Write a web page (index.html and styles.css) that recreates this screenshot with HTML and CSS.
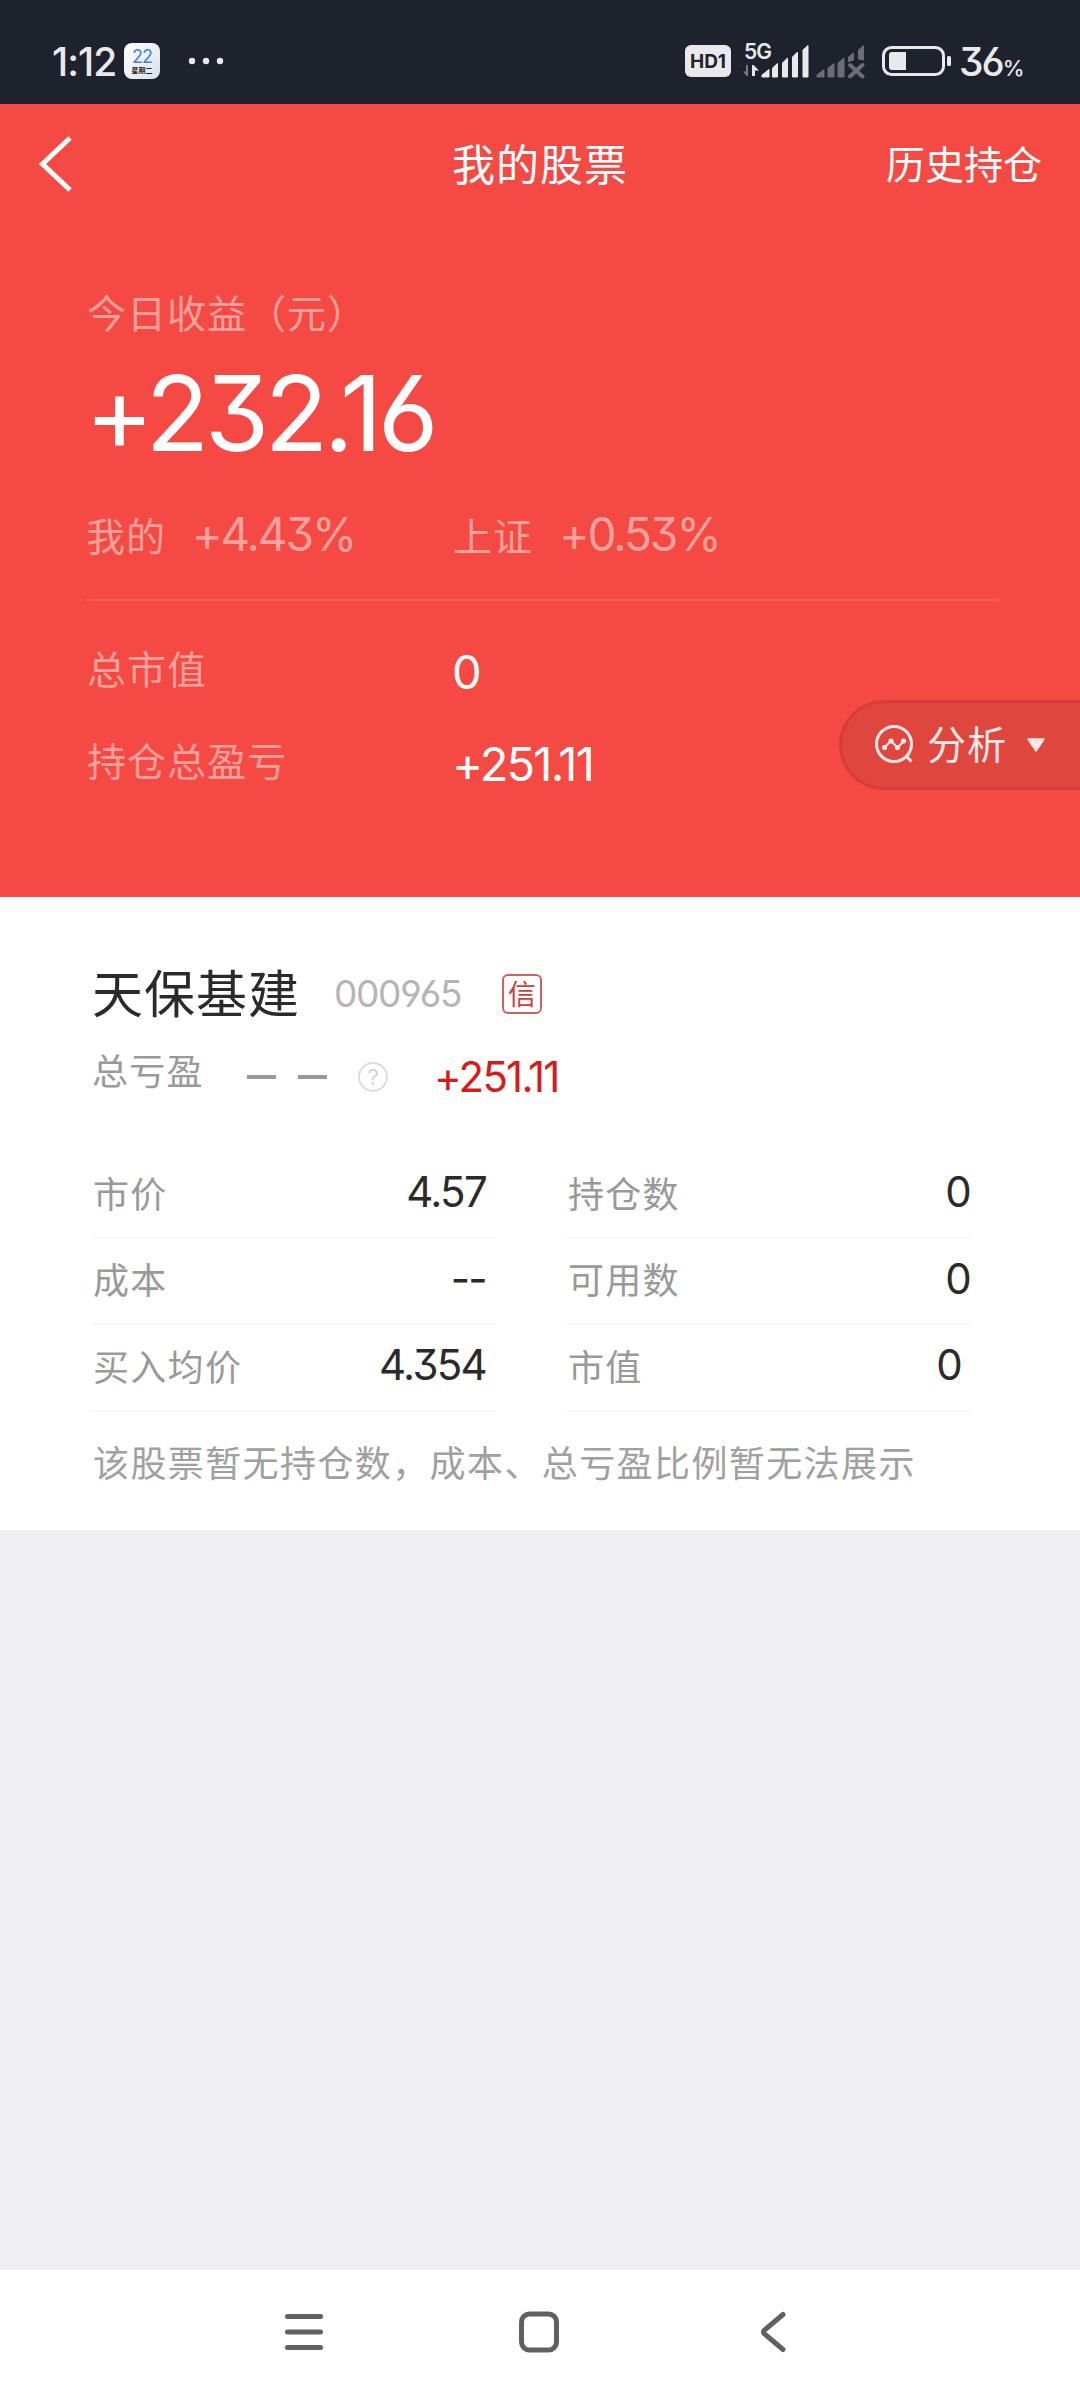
FILE: index.html
```html
<!DOCTYPE html>
<html lang="zh-CN">
  <head>
    <meta charset="UTF-8" />
    <meta name="viewport" content="width=device-width, initial-scale=1.0" />
    <title>我的股票</title>
    <link rel="stylesheet" href="styles.css">
  </head>
  <body>
    <div class="status-bar">
      <span class="time num">1:12</span>
      <div class="calendar">
        <span class="cal-day num">22</span>
        <span class="cal-week">星期二</span>
      </div>
      <svg class="dots" width="36" height="8" viewBox="0 0 36 8" fill="#e9e9eb">
        <circle cx="4" cy="4" r="3.2" /><circle cx="18" cy="4" r="3.2" /><circle cx="32" cy="4" r="3.2" />
      </svg>

      <span class="hd num">HD1</span>
      <div class="network">
        <span class="net-type num">5G</span>
        <svg width="68" height="36" viewBox="0 0 68 36" fill="#e9e9eb">
          <path d="M5 22v11H3.500L0 28.500h3V22z" fill="#77797f" />
          <path d="M9 33V22h1.500l5.500 5.500h-4V33z" />
          <path d="M19 32l7-5.500V34h-7zM29.500 25l5-4.500V34h-5zM39.500 20l5-5V34h-5zM49.500 14l5-5V34h-5zM60 7l5-4.500V34h-5z" stroke="#e9e9eb" stroke-width="1" stroke-linejoin="round" />
        </svg>
      </div>
      <svg class="signal-off" width="50" height="36" viewBox="0 0 50 36" fill="#6c6e75">
        <path d="M1 32l7-5.500V34H1zM12 25l6-4.500V34h-6zM22 20l6-5V34h-6zM32.500 14l5-4v7l-5 1.500zM42.500 7l5-4.500V17l-5-1z" stroke="#6c6e75" stroke-width="1" stroke-linejoin="round" />
        <path d="M34 22l12.500 11.500M46.500 22L34 33.500" stroke="#6c6e75" stroke-width="4" stroke-linecap="round" />
      </svg>
      <svg class="battery" width="70" height="32" viewBox="0 0 70 32">
        <rect x="1.500" y="2.500" width="60" height="27" rx="8" fill="none" stroke="#e9e9eb" stroke-width="3" />
        <path d="M10 7h14v18H10a3 3 0 0 1-3-3V10a3 3 0 0 1 3-3z" fill="#e9e9eb" />
        <rect x="65" y="11" width="4" height="10" rx="1.500" fill="#e9e9eb" />
      </svg>
      <span class="percent num">36<small>%</small></span>
    </div>

    <div class="summary">
      <div class="nav">
        <svg width="34" height="56" viewBox="0 0 34 56">
          <path d="M32 2L4.500 28 32 54" fill="none" stroke="#fff" stroke-width="5" />
        </svg>
        <h1 class="title">我的股票</h1>
        <span class="history">历史持仓</span>
      </div>

      <p class="today-label">今日收益（元）</p>
      <p class="today-value num">+232.16</p>

      <div class="rates">
        <span class="rate-name">我的</span>
        <span class="rate-value num mine">+4.43%</span>
        <span class="rate-name">上证</span>
        <span class="rate-value num">+0.53%</span>
      </div>

      <div class="totals">
        <span class="total-label">总市值</span>
        <span class="total-value num">0</span>
        <span class="total-label">持仓总盈亏</span>
        <span class="total-value num">+251.11</span>
      </div>

      <div class="analyze">
        <svg width="42" height="42" viewBox="0 0 42 42" fill="none" stroke="#ffe9e8" stroke-width="3">
          <circle cx="20" cy="20" r="17.500" />
          <path d="M32 32l5.500 5.500" />
          <path d="M10.500 23.500l6.500-6.500 6.500 6.500 6.500-6.500" stroke-width="2" />
          <g fill="#ffe9e8" stroke="none">
            <circle cx="10.500" cy="23.500" r="2.600" /><circle cx="17" cy="17" r="2.600" />
            <circle cx="23.500" cy="23.500" r="2.600" /><circle cx="29.500" cy="17" r="2.600" />
          </g>
        </svg>
        <span class="analyze-text">分析</span>
        <svg width="18" height="14" viewBox="0 0 18 14">
          <path d="M1 1h16L9 13z" fill="#ffe9e8" stroke="#ffe9e8" stroke-width="1.500" stroke-linejoin="round" />
        </svg>
      </div>
    </div>

    <div class="stock">
      <div class="stock-head">
        <h2 class="stock-name">天保基建</h2>
        <span class="stock-code num">000965</span>
        <span class="badge">信</span>
      </div>
      <div class="stock-profit">
        <span class="profit-label">总亏盈</span>
        <svg class="dashes" width="80" height="6" viewBox="0 0 80 6" fill="#999">
          <rect x="0" y="1" width="29" height="4" /><rect x="51" y="1" width="29" height="4" />
        </svg>
        <span class="help num">?</span>
        <span class="profit-value num">+251.11</span>
      </div>

      <div class="details">
        <div class="cell"><span>市价</span><b class="num">4.57</b></div>
        <div class="cell right"><span>持仓数</span><b class="num">0</b></div>
        <div class="cell"><span>成本</span><b class="num">--</b></div>
        <div class="cell right"><span>可用数</span><b class="num">0</b></div>
        <div class="cell"><span>买入均价</span><b class="num">4.354</b></div>
        <div class="cell right market"><span>市值</span><b class="num">0</b></div>
      </div>
      <p class="note">该股票暂无持仓数，成本、总亏盈比例暂无法展示</p>
    </div>

    <div class="system-nav">
      <svg width="40" height="44" viewBox="0 0 40 44" stroke="#606060" stroke-width="5" stroke-linecap="round">
        <path d="M3.500 6.500h33M3.500 22h33M3.500 37.500h33" />
      </svg>
      <svg class="home" width="42" height="44" viewBox="0 0 42 44">
        <rect x="3.500" y="4" width="35" height="36" rx="8" fill="none" stroke="#606060" stroke-width="5" />
      </svg>
      <svg width="28" height="44" viewBox="0 0 28 44">
        <path d="M24 4.500L5.500 20q-2 2 0 4L24 39.500" fill="none" stroke="#606060" stroke-width="5" stroke-linecap="round" />
      </svg>
    </div>
  </body>
</html>
```
FILE: styles.css
```css
* {
  box-sizing: border-box;
}
body {
  margin: 0;
  width: 1080px;
  height: 2400px;
  display: flex;
  flex-direction: column;
  background-color: #efeef3;
  font-family: "Noto Sans CJK SC", sans-serif;
  white-space: nowrap;
}
h1, h2, p {
  margin: 0;
  font-weight: 400;
}
svg {
  display: block;
  flex: none;
}
.num {
  font-family: Inter, "Noto Sans CJK SC", sans-serif;
  font-feature-settings: "cv03", "cv04", "cv09";
}

/* status bar */
.status-bar {
  height: 104px;
  padding: 18px 0 0 52px;
  display: flex;
  align-items: center;
  background-color: #1e222d;
  color: #e9e9eb;
}
.time {
  width: 72px;
  font-size: 39px;
  font-weight: 500;
  letter-spacing: -1px;
}
.calendar {
  width: 36px;
  height: 36px;
  border-radius: 8px;
  background: linear-gradient(135deg, #fff, #d9e2ea);
  display: flex;
  flex-direction: column;
  align-items: center;
}
.cal-day {
  margin-top: 5px;
  height: 18px;
  font-size: 18px;
  line-height: 18px;
  letter-spacing: -1px;
  color: #4583dc;
}
.cal-week {
  font-size: 7px;
  line-height: 8px;
  font-weight: 700;
  color: #222;
}
.dots {
  margin-left: 28px;
}
.hd {
  margin-left: 461px;
  width: 46px;
  height: 32px;
  border-radius: 6px;
  background-color: #e9e9eb;
  color: #1e222d;
  font-size: 19px;
  line-height: 33px;
  font-weight: 700;
  text-align: center;
}
.network {
  position: relative;
  margin-left: 12px;
}
.net-type {
  position: absolute;
  left: 1px;
  top: -3px;
  font-size: 21px;
  line-height: 24px;
  font-weight: 600;
  letter-spacing: -1px;
}
.signal-off {
  margin-left: 5px;
}
.battery {
  margin-left: 16px;
}
.percent {
  margin-left: 7px;
  font-size: 39px;
  font-weight: 500;
  letter-spacing: -2px;
}
.percent small {
  font-size: 22px;
}

/* red summary */
.summary {
  position: relative;
  height: 793px;
  background-color: #f54944;
  color: #fff;
}
.nav {
  height: 120px;
  padding: 0 38px 0 38px;
  display: grid;
  grid-template-columns: 1fr auto 1fr;
  align-items: center;
}
.title {
  padding-bottom: 5px;
  font-size: 43px;
  letter-spacing: 1px;
}
.history {
  justify-self: end;
  padding-bottom: 5px;
  font-size: 39px;
}
.today-label {
  margin-top: 57px;
  padding-left: 87px;
  font-size: 39px;
  line-height: 60px;
  letter-spacing: 1px;
  color: #ffa19d;
}
.today-value {
  margin-top: 2px;
  padding-left: 85px;
  font-size: 104px;
  line-height: 140px;
  letter-spacing: -4.5px;
}
.rates {
  height: 115px;
  margin: 3px 81px 0 86px;
  padding-top: 18px;
  display: flex;
  border-bottom: 2px solid #fb5a55;
  line-height: 60px;
  color: #ffa19d;
}
.rate-name {
  width: 106px;
  font-size: 39px;
  letter-spacing: 1px;
}
.rate-value {
  font-size: 46px;
  letter-spacing: -2px;
}
.mine {
  width: 261px;
}
.totals {
  padding: 20px 0 0 87px;
  display: grid;
  grid-template-columns: 365px auto;
  grid-auto-rows: 92px;
  line-height: 92px;
}
.total-label {
  font-size: 39px;
  letter-spacing: 1px;
  color: #ffa19d;
}
.total-value {
  padding-top: 5px;
  font-size: 47px;
  letter-spacing: -1.8px;
}
.analyze {
  position: absolute;
  right: 0;
  top: 596px;
  width: 241px;
  height: 90px;
  padding-left: 32px;
  display: flex;
  align-items: center;
  border: 3px solid #da3b38;
  border-right: 0;
  border-radius: 45px 0 0 45px;
  background-color: #df463e;
}
.analyze-text {
  width: 100px;
  margin-left: 11px;
  padding-bottom: 6px;
  font-size: 39px;
  letter-spacing: 1px;
  color: #ffe9e8;
}

/* stock card */
.stock {
  height: 633px;
  padding: 56px 0 0 92px;
  background-color: #fff;
}
.stock-head {
  height: 80px;
  display: flex;
  align-items: center;
}
.stock-name {
  width: 242px;
  padding-bottom: 5px;
  font-size: 51px;
  letter-spacing: 1px;
  color: #2a2a2a;
}
.stock-code {
  width: 168px;
  font-size: 37px;
  letter-spacing: -1.3px;
  color: #b5b5b5;
}
.badge {
  width: 40px;
  height: 40px;
  margin-top: 2px;
  border: 2px solid #d45f5f;
  border-radius: 6px;
  font-size: 28px;
  line-height: 35px;
  text-align: center;
  color: #d03c3c;
}
.stock-profit {
  height: 76px;
  padding-top: 12px;
  display: flex;
  align-items: center;
}
.profit-label {
  width: 155px;
  padding-bottom: 16px;
  font-size: 36px;
  letter-spacing: 1.3px;
  color: #999;
}
.help {
  width: 30px;
  height: 30px;
  margin: 0 46px 0 31px;
  border: 2px solid #dcdcdc;
  border-radius: 50%;
  font-size: 22px;
  line-height: 27px;
  text-align: center;
  color: #d3d3d3;
}
.profit-value {
  padding-bottom: 1px;
  font-size: 42px;
  letter-spacing: -1.8px;
  color: #d81a1a;
}
.details {
  margin-top: 43px;
  display: grid;
  grid-template-columns: 404px 404px;
  column-gap: 71px;
}
.cell {
  height: 86.600px;
  padding: 0 10px 5px 1px;
  display: flex;
  align-items: center;
  justify-content: space-between;
  border-bottom: 2px solid #f6f6f6;
  font-size: 36px;
  letter-spacing: 1.3px;
  color: #999;
}
.cell b {
  font-size: 42px;
  font-weight: 400;
  letter-spacing: -1.7px;
  color: #2a2a2a;
}
.right {
  padding-right: 1px;
}
.market {
  padding-right: 10px;
}
.note {
  padding-left: 1px;
  font-size: 36px;
  line-height: 99px;
  letter-spacing: 1.4px;
  color: #a0a0a0;
}

/* phone buttons */
.system-nav {
  height: 130px;
  margin-top: auto;
  padding: 40px 293px 0 284px;
  display: flex;
  justify-content: space-between;
  background-color: #fff;
}
.home {
  margin-right: 5px;
}
```
